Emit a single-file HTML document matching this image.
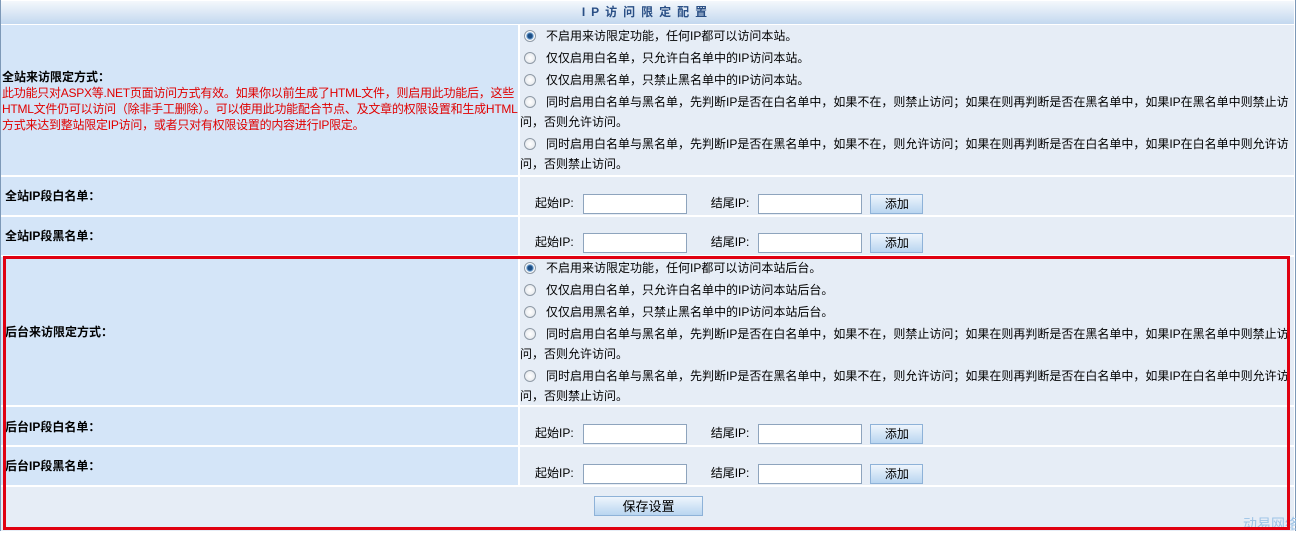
<!DOCTYPE html>
<html><head><meta charset="utf-8"><style>
*{margin:0;padding:0;box-sizing:border-box}
body{width:1296px;height:531px;background:#fff;font-family:"Liberation Sans","Noto Sans CJK SC",sans-serif;font-size:12px;color:#000;position:relative;overflow:hidden}
.a{position:absolute;white-space:nowrap}
.L{background:#d4e5f8}
.R{background:#e6edf6}
.hd{left:1px;top:1px;width:1293px;height:23px;background:linear-gradient(#f4f8fc,#c3d8ef);text-align:center;font-weight:bold;color:#2a4f85;line-height:23px;letter-spacing:6px}
.lab{font-weight:bold;left:5px}
.rd{left:520px;width:774px;line-height:20px}
.rd div{white-space:nowrap}
.rd .o{position:relative;padding-left:26px}
.rd .o i{position:absolute;left:4px;top:4px;width:12px;height:12px;border-radius:50%;border:1px solid #8f9aa6;background:radial-gradient(#fff,#dfe3e8)}
.rd .o i.on{background:radial-gradient(#1d4f86 30%,#6d9fd1 45%,#fff 60%)}
.ip{left:535px;line-height:20px}
.box{display:inline-block;width:104px;height:20px;border:1px solid #8ea4bd;background:#fff;vertical-align:middle;margin-left:9px}
.btn{display:inline-block;width:53px;height:20px;border:1px solid #8eb2d8;background:linear-gradient(#eef5fc,#b9d5f0);text-align:center;line-height:19px;vertical-align:middle}
.s1{display:inline-block;width:24px}
.s2{display:inline-block;width:8px}
</style></head><body>
<div class="a" style="left:0;top:0;width:1296px;height:531px;border-left:1px solid #7d99b8;border-right:1px solid #7d99b8"></div>
<div class="a hd">IP访问限定配置</div>
<div class="a L" style="left:1px;top:25px;width:517px;height:150px"></div>
<div class="a R" style="left:520px;top:25px;width:774px;height:150px"></div>
<div class="a L" style="left:1px;top:177px;width:517px;height:38px"></div>
<div class="a R" style="left:520px;top:177px;width:774px;height:38px"></div>
<div class="a L" style="left:1px;top:217px;width:517px;height:38px"></div>
<div class="a R" style="left:520px;top:217px;width:774px;height:38px"></div>
<div class="a L" style="left:1px;top:257px;width:517px;height:148px"></div>
<div class="a R" style="left:520px;top:257px;width:774px;height:148px"></div>
<div class="a L" style="left:1px;top:407px;width:517px;height:38px"></div>
<div class="a R" style="left:520px;top:407px;width:774px;height:38px"></div>
<div class="a L" style="left:1px;top:447px;width:517px;height:38px"></div>
<div class="a R" style="left:520px;top:447px;width:774px;height:38px"></div>
<div class="a R" style="left:1px;top:487px;width:1293px;height:44px"></div>

<div class="a" style="left:2px;top:69px;line-height:16px"><b>全站来访限定方式：</b><br><span style="color:#e00000;letter-spacing:-0.25px">此功能只对ASPX等.NET页面访问方式有效。如果你以前生成了HTML文件，则启用此功能后，这些<br>HTML文件仍可以访问（除非手工删除）。可以使用此功能配合节点、及文章的权限设置和生成HTML<br>方式来达到整站限定IP访问，或者只对有权限设置的内容进行IP限定。</span></div>
<div class="a rd" style="top:26px">
<div class="o" style="margin-bottom:2px"><i class="on"></i>不启用来访限定功能，任何IP都可以访问本站。</div>
<div class="o" style="margin-bottom:2px"><i></i>仅仅启用白名单，只允许白名单中的IP访问本站。</div>
<div class="o" style="margin-bottom:2px"><i></i>仅仅启用黑名单，只禁止黑名单中的IP访问本站。</div>
<div class="o"><i></i>同时启用白名单与黑名单，先判断IP是否在白名单中，如果不在，则禁止访问；如果在则再判断是否在黑名单中，如果IP在黑名单中则禁止访</div><div style="margin-bottom:2px">问，否则允许访问。</div>
<div class="o"><i></i>同时启用白名单与黑名单，先判断IP是否在黑名单中，如果不在，则允许访问；如果在则再判断是否在白名单中，如果IP在白名单中则允许访</div><div>问，否则禁止访问。</div>
</div>
<div class="a lab" style="top:187px">全站IP段白名单：</div>
<div class="a lab" style="top:227px">全站IP段黑名单：</div>
<div class="a ip" style="top:193px">起始IP:<span class="box"></span><span class="s1"></span>结尾IP:<span class="box"></span><span class="s2"></span><span class="btn">添加</span></div>
<div class="a ip" style="top:232px">起始IP:<span class="box"></span><span class="s1"></span>结尾IP:<span class="box"></span><span class="s2"></span><span class="btn">添加</span></div>

<div class="a lab" style="top:323px">后台来访限定方式：</div>
<div class="a rd" style="top:258px">
<div class="o" style="margin-bottom:2px"><i class="on"></i>不启用来访限定功能，任何IP都可以访问本站后台。</div>
<div class="o" style="margin-bottom:2px"><i></i>仅仅启用白名单，只允许白名单中的IP访问本站后台。</div>
<div class="o" style="margin-bottom:2px"><i></i>仅仅启用黑名单，只禁止黑名单中的IP访问本站后台。</div>
<div class="o"><i></i>同时启用白名单与黑名单，先判断IP是否在白名单中，如果不在，则禁止访问；如果在则再判断是否在黑名单中，如果IP在黑名单中则禁止访</div><div style="margin-bottom:2px">问，否则允许访问。</div>
<div class="o"><i></i>同时启用白名单与黑名单，先判断IP是否在黑名单中，如果不在，则允许访问；如果在则再判断是否在白名单中，如果IP在白名单中则允许访</div><div>问，否则禁止访问。</div>
</div>
<div class="a lab" style="top:418px">后台IP段白名单：</div>
<div class="a lab" style="top:457px">后台IP段黑名单：</div>
<div class="a ip" style="top:423px">起始IP:<span class="box"></span><span class="s1"></span>结尾IP:<span class="box"></span><span class="s2"></span><span class="btn">添加</span></div>
<div class="a ip" style="top:463px">起始IP:<span class="box"></span><span class="s1"></span>结尾IP:<span class="box"></span><span class="s2"></span><span class="btn">添加</span></div>
<div class="a" style="left:594px;top:496px"><span class="btn" style="width:109px;font-size:13px">保存设置</span></div>
<div class="a" style="left:1243px;top:514px;color:#9cc3e6;font-size:14px">动易网络</div>
<div class="a" style="left:3px;top:256px;width:1287px;height:274px;border:3px solid #e00010"></div>
</body></html>
